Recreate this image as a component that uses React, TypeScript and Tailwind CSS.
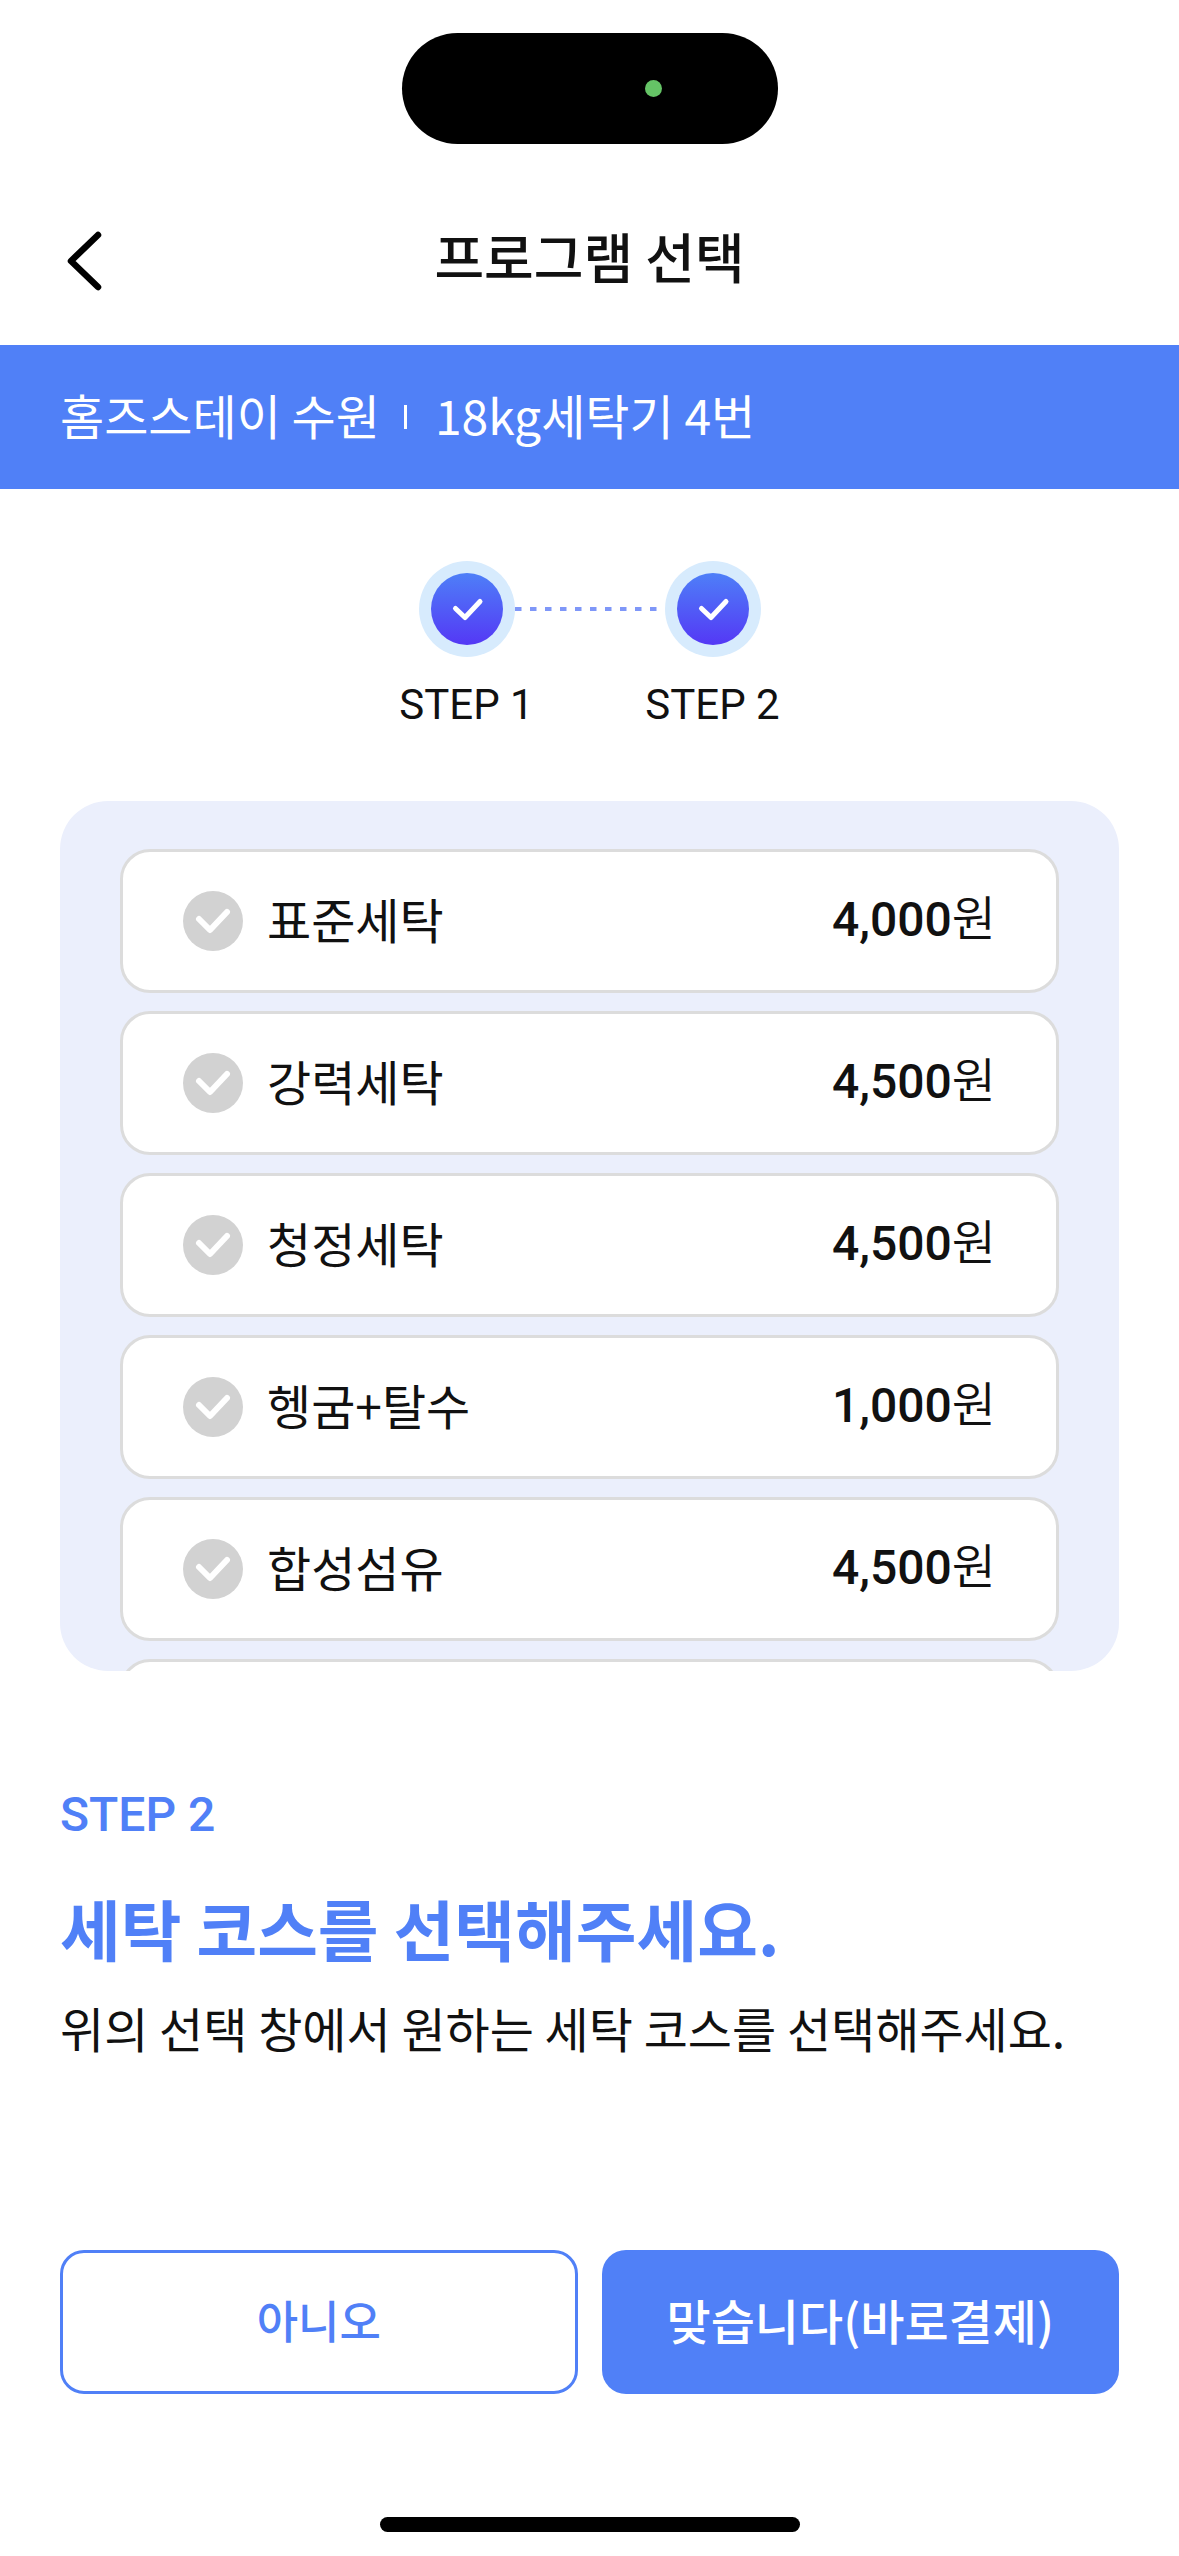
import { useState } from "react";

interface Course {
  id: string;
  name: string;
  price: string;
}

const COURSES: Course[] = [
  { id: "standard", name: "표준세탁", price: "4,000" },
  { id: "power", name: "강력세탁", price: "4,500" },
  { id: "pure", name: "청정세탁", price: "4,500" },
  { id: "rinse-spin", name: "헹굼+탈수", price: "1,000" },
  { id: "synthetic", name: "합성섬유", price: "4,500" },
];

const STEPS = ["STEP 1", "STEP 2"];

function StatusArea() {
  return (
    <div className="flex h-[178px] justify-center pt-[33px]" aria-hidden="true">
      <div className="flex h-[111px] w-[376px] items-center justify-end rounded-full bg-black pr-[116px]">
        <span className="size-[17px] rounded-full bg-[#65c466]" />
      </div>
    </div>
  );
}

function Header() {
  return (
    <header className="grid h-[167px] grid-cols-[1fr_auto_1fr] items-center px-[60px]">
      <button type="button" aria-label="뒤로" className="w-12 justify-self-start">
        <svg viewBox="0 0 48 64" className="h-16 w-12" fill="none">
          <path
            d="M38 5 L11 31 L38 57"
            stroke="#000"
            strokeWidth="6.5"
            strokeLinecap="round"
            strokeLinejoin="round"
          />
        </svg>
      </button>
      <h1 className="pb-3 text-[54px] leading-[80px] font-medium">프로그램 선택</h1>
    </header>
  );
}

function StepIndicator() {
  return (
    <ol className="flex justify-center pt-[72px]">
      {STEPS.map((step, idx) => (
        <li key={step} className="flex">
          {idx > 0 && (
            <svg viewBox="0 0 150 96" className="h-24 w-[150px]" aria-hidden="true">
              <path d="M0 48 H143" stroke="#7f97f8" strokeWidth="4" strokeDasharray="6.5 8.5" />
            </svg>
          )}
          <div className="flex w-24 flex-col items-center">
            <span className="flex size-24 items-center justify-center rounded-full bg-[#d7ebfd]">
              <svg viewBox="0 0 72 72" className="size-[72px]" fill="none" aria-hidden="true">
                <defs>
                  <linearGradient id={`step-fill-${idx}`} x1="0" y1="0" x2="0" y2="1">
                    <stop stopColor="#4e7ff8" />
                    <stop offset="1" stopColor="#5438f5" />
                  </linearGradient>
                </defs>
                <circle cx="36" cy="36" r="36" fill={`url(#step-fill-${idx})`} />
                <path
                  d="M24.5 35.5 L34 44.5 L49 28.5"
                  stroke="#fff"
                  strokeWidth="5"
                  strokeLinecap="round"
                  strokeLinejoin="round"
                />
              </svg>
            </span>
            <span className="pt-[18px] font-['Roboto'] text-[42px] leading-[60px] whitespace-nowrap">
              {step}
            </span>
          </div>
        </li>
      ))}
    </ol>
  );
}

function CheckMark({ active }: { active: boolean }) {
  return (
    <svg viewBox="0 0 60 60" className="size-[60px] shrink-0" fill="none" aria-hidden="true">
      <circle cx="30" cy="30" r="30" fill={active ? "#5080f7" : "#d2d2d2"} />
      <path
        d="M16 28 L27 39 L44 21"
        stroke="#fff"
        strokeWidth="6"
        strokeLinecap="round"
        strokeLinejoin="round"
      />
    </svg>
  );
}

function CourseList() {
  const [selected, setSelected] = useState<string | null>(null);

  return (
    <fieldset className="flex h-[870px] flex-col gap-[18px] overflow-hidden rounded-[48px] bg-[#ebeffc] px-[60px] pt-12">
      {COURSES.map((course) => (
        <label
          key={course.id}
          className="relative flex h-36 shrink-0 cursor-pointer items-center gap-6 rounded-[30px] border-3 border-[#dcdcdc] bg-white px-[60px]"
        >
          <input
            type="radio"
            name="course"
            className="sr-only"
            checked={selected === course.id}
            onChange={() => setSelected(course.id)}
          />
          <CheckMark active={selected === course.id} />
          <span className="flex-1 pb-1.5 text-5xl">{course.name}</span>
          <span className="pb-2 text-5xl font-[350]">
            <strong className="font-['Roboto'] font-medium">{course.price}</strong>원
          </span>
        </label>
      ))}
      {/* Next card peeks out at the bottom edge */}
      <div className="h-36 shrink-0 rounded-[30px] border-3 border-[#dcdcdc] bg-white" />
    </fieldset>
  );
}

export default function App() {
  return (
    <div className="flex min-h-screen flex-col bg-white font-['Noto_Sans_CJK_KR',sans-serif] text-[#111]">
      <StatusArea />
      <Header />

      <div className="flex h-36 items-center bg-[#5080f7] px-[60px] text-5xl text-white">
        <span className="pb-1.5">홈즈스테이 수원</span>
        <span className="mr-7 ml-6 h-6 w-[3px] bg-white" />
        <span className="pb-1.5">18kg세탁기 4번</span>
      </div>

      <StepIndicator />

      <main className="flex flex-1 flex-col px-[60px] pt-[66px]">
        <CourseList />

        <section className="pt-[108px]">
          <p className="font-['Roboto'] text-5xl leading-[72px] font-medium text-[#5080f7]">STEP 2</p>
          <h2 className="pt-7 text-[66px] leading-[96px] font-bold text-[#5080f7]">
            세탁 코스를 선택해주세요.
          </h2>
          <p className="pt-4 text-5xl leading-[72px]">
            위의 선택 창에서 원하는 세탁 코스를 선택해주세요.
          </p>
        </section>

        <div className="mt-auto grid grid-cols-2 gap-6">
          <button
            type="button"
            className="h-36 rounded-3xl border-3 border-[#5080f7] bg-white pb-1 text-[45px] font-medium text-[#5080f7]"
          >
            아니오
          </button>
          <button type="button" className="h-36 rounded-3xl bg-[#5080f7] pb-1.5 text-5xl font-medium text-white">
            맞습니다(바로결제)
          </button>
        </div>
      </main>

      <div className="flex h-[162px] items-end justify-center pb-6" aria-hidden="true">
        <span className="h-[15px] w-[420px] rounded-full bg-black" />
      </div>
    </div>
  );
}
